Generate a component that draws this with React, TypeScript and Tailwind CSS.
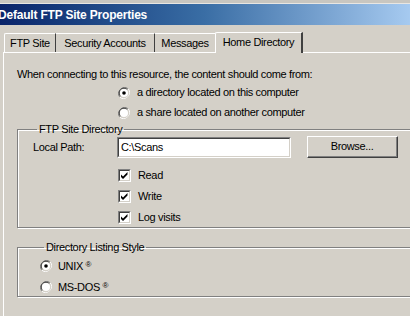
const font = { fontFamily: '"Liberation Sans", Arial, sans-serif' };

function Radio({ checked }: { checked?: boolean }) {
  return (
    <svg width="12" height="12" viewBox="0 0 12 12" className="shrink-0">
      <path d="M10.2 1.8A6 6 0 0 0 1.8 10.2" fill="none" stroke="#808080" strokeWidth="1" />
      <path d="M9.4 2.6A4.8 4.8 0 0 0 2.6 9.4" fill="none" stroke="#404040" strokeWidth="1" />
      <path d="M1.8 10.2A6 6 0 0 0 10.2 1.8" fill="none" stroke="#ffffff" strokeWidth="1" />
      <path d="M2.6 9.4A4.8 4.8 0 0 0 9.4 2.6" fill="none" stroke="#d4d0c8" strokeWidth="1" />
      <circle cx="6" cy="6" r="4" fill="#ffffff" />
      {checked && <circle cx="6" cy="6" r="1.8" fill="#000000" />}
    </svg>
  );
}

function Check() {
  return (
    <span className="w-[13px] h-[13px] shrink-0 border border-t-[#808080] border-l-[#808080] border-b-white border-r-white">
      <span className="block w-full h-full bg-white border border-t-[#404040] border-l-[#404040] border-b-[#d4d0c8] border-r-[#d4d0c8]">
        <svg width="9" height="9" viewBox="0 0 9 9" className="block">
          <path d="M1 3.5 L3 5.5 L7.5 1 L7.5 3.5 L3 8 L1 6Z" fill="#000" />
        </svg>
      </span>
    </span>
  );
}

function Group({ title, className, children }: { title: string; className?: string; children: React.ReactNode }) {
  return (
    <fieldset
      className={`border border-[#808080] shadow-[inset_1px_1px_0_#fff,1px_1px_0_#fff] ${className ?? ''}`}
    >
      <legend className="ml-[4px] px-[2px] leading-[14px] text-black">{title}</legend>
      {children}
    </fieldset>
  );
}

export default function App() {
  return (
    <div
      className="w-[410px] h-[316px] overflow-hidden bg-[#d4d0c8] text-black text-[11px] tracking-[-0.35px]"
      style={font}
    >
      <div className="h-[4px] bg-[#c8c6c0] border-b border-[#e8e6e2]" />
      <div className="h-[21px] flex items-center bg-gradient-to-r from-[#0a246a] via-[#3a6ea5] to-[#a6caf0]">
        <span className="ml-[-2px] text-white font-bold text-[12px] tracking-[-0.2px]">Default FTP Site Properties</span>
      </div>

      {/* tab strip */}
      <div className="flex items-end h-[27px] pl-[4px]">
        <div className="w-[52px] h-[19px] pt-[1px] flex items-center justify-center border-t border-l border-white border-r border-r-[#404040] rounded-tl-[2px]">FTP Site</div>
        <div className="w-[99px] h-[19px] pt-[1px] flex items-center justify-center border-t border-white border-r border-r-[#404040]">Security Accounts</div>
        <div className="w-[60px] h-[19px] pt-[1px] flex items-center justify-center border-t border-white">Messages</div>
        <div className="relative top-[1px] w-[88px] h-[21px] pb-[1px] flex items-center justify-center bg-[#d4d0c8] border-t border-l border-white border-r-2 border-r-[#404040] rounded-tl-[2px] z-10">
          Home Directory
        </div>
      </div>

      {/* tab panel */}
      <div className="ml-[3px] border-t border-l border-white h-[300px] pl-[13px]">
        <div className="pt-[14px] leading-[15px]">When connecting to this resource, the content should come from:</div>
        <div className="pl-[101px] mt-[3px] flex flex-col gap-[5px]">
          <label className="flex items-center gap-[7px] h-[15px]">
            <Radio checked />
            <span>a directory located on this computer</span>
          </label>
          <label className="flex items-center gap-[7px] h-[15px]">
            <Radio />
            <span>a share located on another computer</span>
          </label>
        </div>

        <Group title="FTP Site Directory" className="mt-[2px] w-[420px] h-[106px] pl-[15px]">
          <div className="flex items-center">
            <span className="w-[84px]">Local Path:</span>
            <div className="w-[174px] h-[21px] border border-t-[#808080] border-l-[#808080] border-b-white border-r-white">
              <div className="h-full bg-white border border-t-[#404040] border-l-[#404040] border-b-[#d4d0c8] border-r-[#d4d0c8] pl-[2px] flex items-center">
                C:\Scans
              </div>
            </div>
            <button className="ml-[16px] w-[91px] h-[22px] border border-t-white border-l-white border-b-[#404040] border-r-[#404040]">
              <span className="flex h-full items-center justify-center border-b border-r border-[#808080]">Browse...</span>
            </button>
          </div>
          <div className="pl-[85px] mt-[10px] flex flex-col gap-[7px]">
            <label className="flex items-center gap-[7px] h-[14px]"><Check />Read</label>
            <label className="flex items-center gap-[7px] h-[14px]"><Check />Write</label>
            <label className="flex items-center gap-[7px] h-[14px]"><Check />Log visits</label>
          </div>
        </Group>

        <Group title="Directory Listing Style" className="mt-[12px] w-[420px] h-[57px] pl-[22px]">
          <div className="flex flex-col gap-[7px] mt-[5px]">
            <label className="flex items-center gap-[6px] h-[14px]">
              <Radio checked />
              <span>UNIX <span className="text-[8px] align-[3px]">®</span></span>
            </label>
            <label className="flex items-center gap-[6px] h-[14px]">
              <Radio />
              <span>MS-DOS <span className="text-[8px] align-[3px]">®</span></span>
            </label>
          </div>
        </Group>
      </div>
    </div>
  );
}
